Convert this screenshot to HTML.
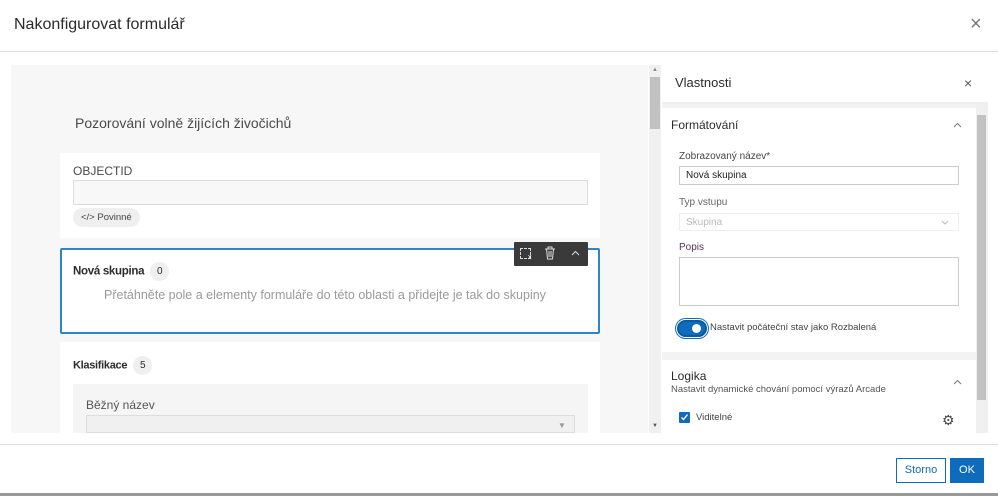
<!DOCTYPE html>
<html><head><meta charset="utf-8"><style>
*{box-sizing:border-box;margin:0;padding:0}
body{width:998px;height:496px;overflow:hidden;background:#fff;font-family:"Liberation Sans",sans-serif;color:#323232;position:relative}
.a{position:absolute}
.b{display:inline-block;width:19px;height:19px;background:#efefef;border-radius:10px;font-size:10px;text-align:center;line-height:19px;font-weight:normal;margin-left:6px;vertical-align:middle}
</style></head><body>
<div class="a" style="left:14px;top:16px;font-size:16px;color:#2b2b2b">Nakonfigurovat formulář</div>
<div class="a" style="left:970px;top:13px;font-size:20px;color:#777">×</div>
<div class="a" style="left:0;top:51px;width:998px;height:1px;background:#e0e0e0"></div>

<div class="a" style="left:11px;top:65px;width:637px;height:368px;background:#f7f7f7"></div>
<div class="a" style="left:649px;top:65px;width:12px;height:368px;background:#f0f0f0"></div>
<div class="a" style="left:650px;top:77px;width:10px;height:52px;background:#c1c1c1"></div>
<div class="a" style="left:652px;top:67px;font-size:6px;color:#888">▲</div>
<div class="a" style="left:652px;top:423px;font-size:6px;color:#555">▼</div>

<div class="a" style="left:75px;top:115px;font-size:14px;color:#4a4a4a">Pozorování volně žijících živočichů</div>

<div class="a" style="left:60px;top:153px;width:540px;height:85px;background:#fff"></div>
<div class="a" style="left:73px;top:164px;font-size:12px;color:#4a4a4a">OBJECTID</div>
<div class="a" style="left:73px;top:180px;width:515px;height:25px;background:#f8f8f8;border:1px solid #ddd"></div>
<div class="a" style="left:73px;top:208px;width:67px;height:19px;background:#efefef;border-radius:10px;font-size:9.5px;color:#444;padding:4px 0 0 8px;white-space:nowrap">&lt;/&gt;&nbsp;Povinné</div>

<div class="a" style="left:60px;top:248px;width:540px;height:86px;background:#fff;border:2px solid #2e86c8;border-radius:2px"></div>
<div class="a" style="left:73px;top:262px;font-size:11.5px;font-weight:bold;color:#2b2b2b;letter-spacing:-0.3px">Nová skupina<span class="b">0</span></div>
<div class="a" style="left:104px;top:288px;font-size:12.5px;color:#9a9a9a">Přetáhněte pole a elementy formuláře do této oblasti a přidejte je tak do skupiny</div>
<div class="a" style="left:514px;top:242px;width:74px;height:24px;background:#3a3a3a;border-radius:1px"></div>
<div class="a" style="left:520px;top:248px;width:11px;height:11px;border:1px dashed #ddd"></div>
<div class="a" style="left:528px;top:254px;font-size:7px;color:#fff">x</div>
<svg class="a" style="left:544px;top:246px" width="12" height="14" viewBox="0 0 12 14"><path d="M1 3h10M4 3V1h4v2M2.5 3l1 10h5l1-10M5 5v6M7 5v6" stroke="#ddd" fill="none"/></svg>
<svg class="a" style="left:571px;top:250px" width="9" height="6"><path d="M1 5l3.5-3.5L8 5" stroke="#ddd" fill="none"/></svg>

<div class="a" style="left:60px;top:342px;width:540px;height:91px;background:#fff"></div>
<div class="a" style="left:73px;top:356px;font-size:11px;font-weight:bold;color:#2b2b2b;letter-spacing:-0.3px">Klasifikace<span class="b">5</span></div>
<div class="a" style="left:73px;top:384px;width:515px;height:49px;background:#f5f5f5"></div>
<div class="a" style="left:86px;top:398px;font-size:12px;color:#555">Běžný název</div>
<div class="a" style="left:86px;top:415px;width:489px;height:18px;background:#f0f0f0;border:1px solid #ddd"></div>
<div class="a" style="left:558px;top:421px;font-size:8px;color:#999">▼</div>

<div class="a" style="left:675px;top:75px;font-size:13px;color:#2b2b2b">Vlastnosti</div>
<div class="a" style="left:964px;top:75px;font-size:14px;color:#555">×</div>
<div class="a" style="left:662px;top:102px;width:326px;height:2px;background:#eee"></div>
<div class="a" style="left:662px;top:104px;width:314px;height:329px;background:#f3f3f3"></div>
<div class="a" style="left:662px;top:108px;width:314px;height:244px;background:#fff"></div>
<div class="a" style="left:662px;top:360px;width:314px;height:73px;background:#fff"></div>
<div class="a" style="left:976px;top:104px;width:12px;height:329px;background:#f0f0f0"></div>
<div class="a" style="left:977px;top:115px;width:9px;height:285px;background:#c1c1c1"></div>

<div class="a" style="left:671px;top:118px;font-size:12px;color:#2b2b2b">Formátování</div>
<svg class="a" style="left:953px;top:122px" width="9" height="6"><path d="M1 5l3.5-3.5L8 5" stroke="#777" fill="none"/></svg>
<div class="a" style="left:679px;top:151px;font-size:10px;color:#444">Zobrazovaný název*</div>
<div class="a" style="left:679px;top:166px;width:280px;height:19px;border:1px solid #ccc;font-size:10px;padding:3px 6px;color:#222">Nová skupina</div>
<div class="a" style="left:679px;top:197px;font-size:10px;color:#666">Typ vstupu</div>
<div class="a" style="left:679px;top:213px;width:280px;height:18px;border:1px solid #eee;font-size:10px;padding:3px 6px;color:#bbb">Skupina</div>
<svg class="a" style="left:941px;top:220px" width="8" height="5"><path d="M1 1l3 3 3-3" stroke="#bbb" fill="none"/></svg>
<div class="a" style="left:679px;top:242px;font-size:10px;color:#553355">Popis</div>
<div class="a" style="left:679px;top:257px;width:280px;height:49px;border:1px solid #ccc"></div>
<div class="a" style="left:677px;top:320px;width:30px;height:17px;background:#0f6cbd;border:2px solid #0a5a9e;border-radius:9px;box-shadow:0 0 0 1px #fff,0 0 0 2px #0f6cbd"></div>
<div class="a" style="left:692px;top:324px;width:9px;height:9px;background:#fff;border-radius:50%"></div>
<div class="a" style="left:710px;top:322px;font-size:9.5px;color:#444">Nastavit počáteční stav jako Rozbalená</div>

<div class="a" style="left:671px;top:369px;font-size:12px;color:#2b2b2b">Logika</div>
<div class="a" style="left:671px;top:384px;font-size:9.5px;color:#555">Nastavit dynamické chování pomocí výrazů Arcade</div>
<svg class="a" style="left:953px;top:379px" width="9" height="6"><path d="M1 5l3.5-3.5L8 5" stroke="#777" fill="none"/></svg>
<div class="a" style="left:679px;top:412px;width:11px;height:11px;background:#0f6cbd;border-radius:1px"></div>
<svg class="a" style="left:680px;top:413px" width="9" height="9"><path d="M1.5 4.5l2 2 4-5" stroke="#fff" stroke-width="1.4" fill="none"/></svg>
<div class="a" style="left:696px;top:412px;font-size:9.5px;color:#444">Viditelné</div>
<div class="a" style="left:942px;top:412px;font-size:14px;color:#444">⚙</div>

<div class="a" style="left:0;top:444px;width:998px;height:1px;background:#e0e0e0"></div>
<div class="a" style="left:896px;top:458px;width:50px;height:25px;border:1px solid #0f6cbd;font-size:11px;color:#0f6cbd;text-align:center;line-height:23px">Storno</div>
<div class="a" style="left:950px;top:458px;width:34px;height:25px;background:#0f6cbd;font-size:11px;color:#fff;text-align:center;line-height:25px">OK</div>
<div class="a" style="left:0;top:493px;width:998px;height:3px;background:#999"></div>
</body></html>
